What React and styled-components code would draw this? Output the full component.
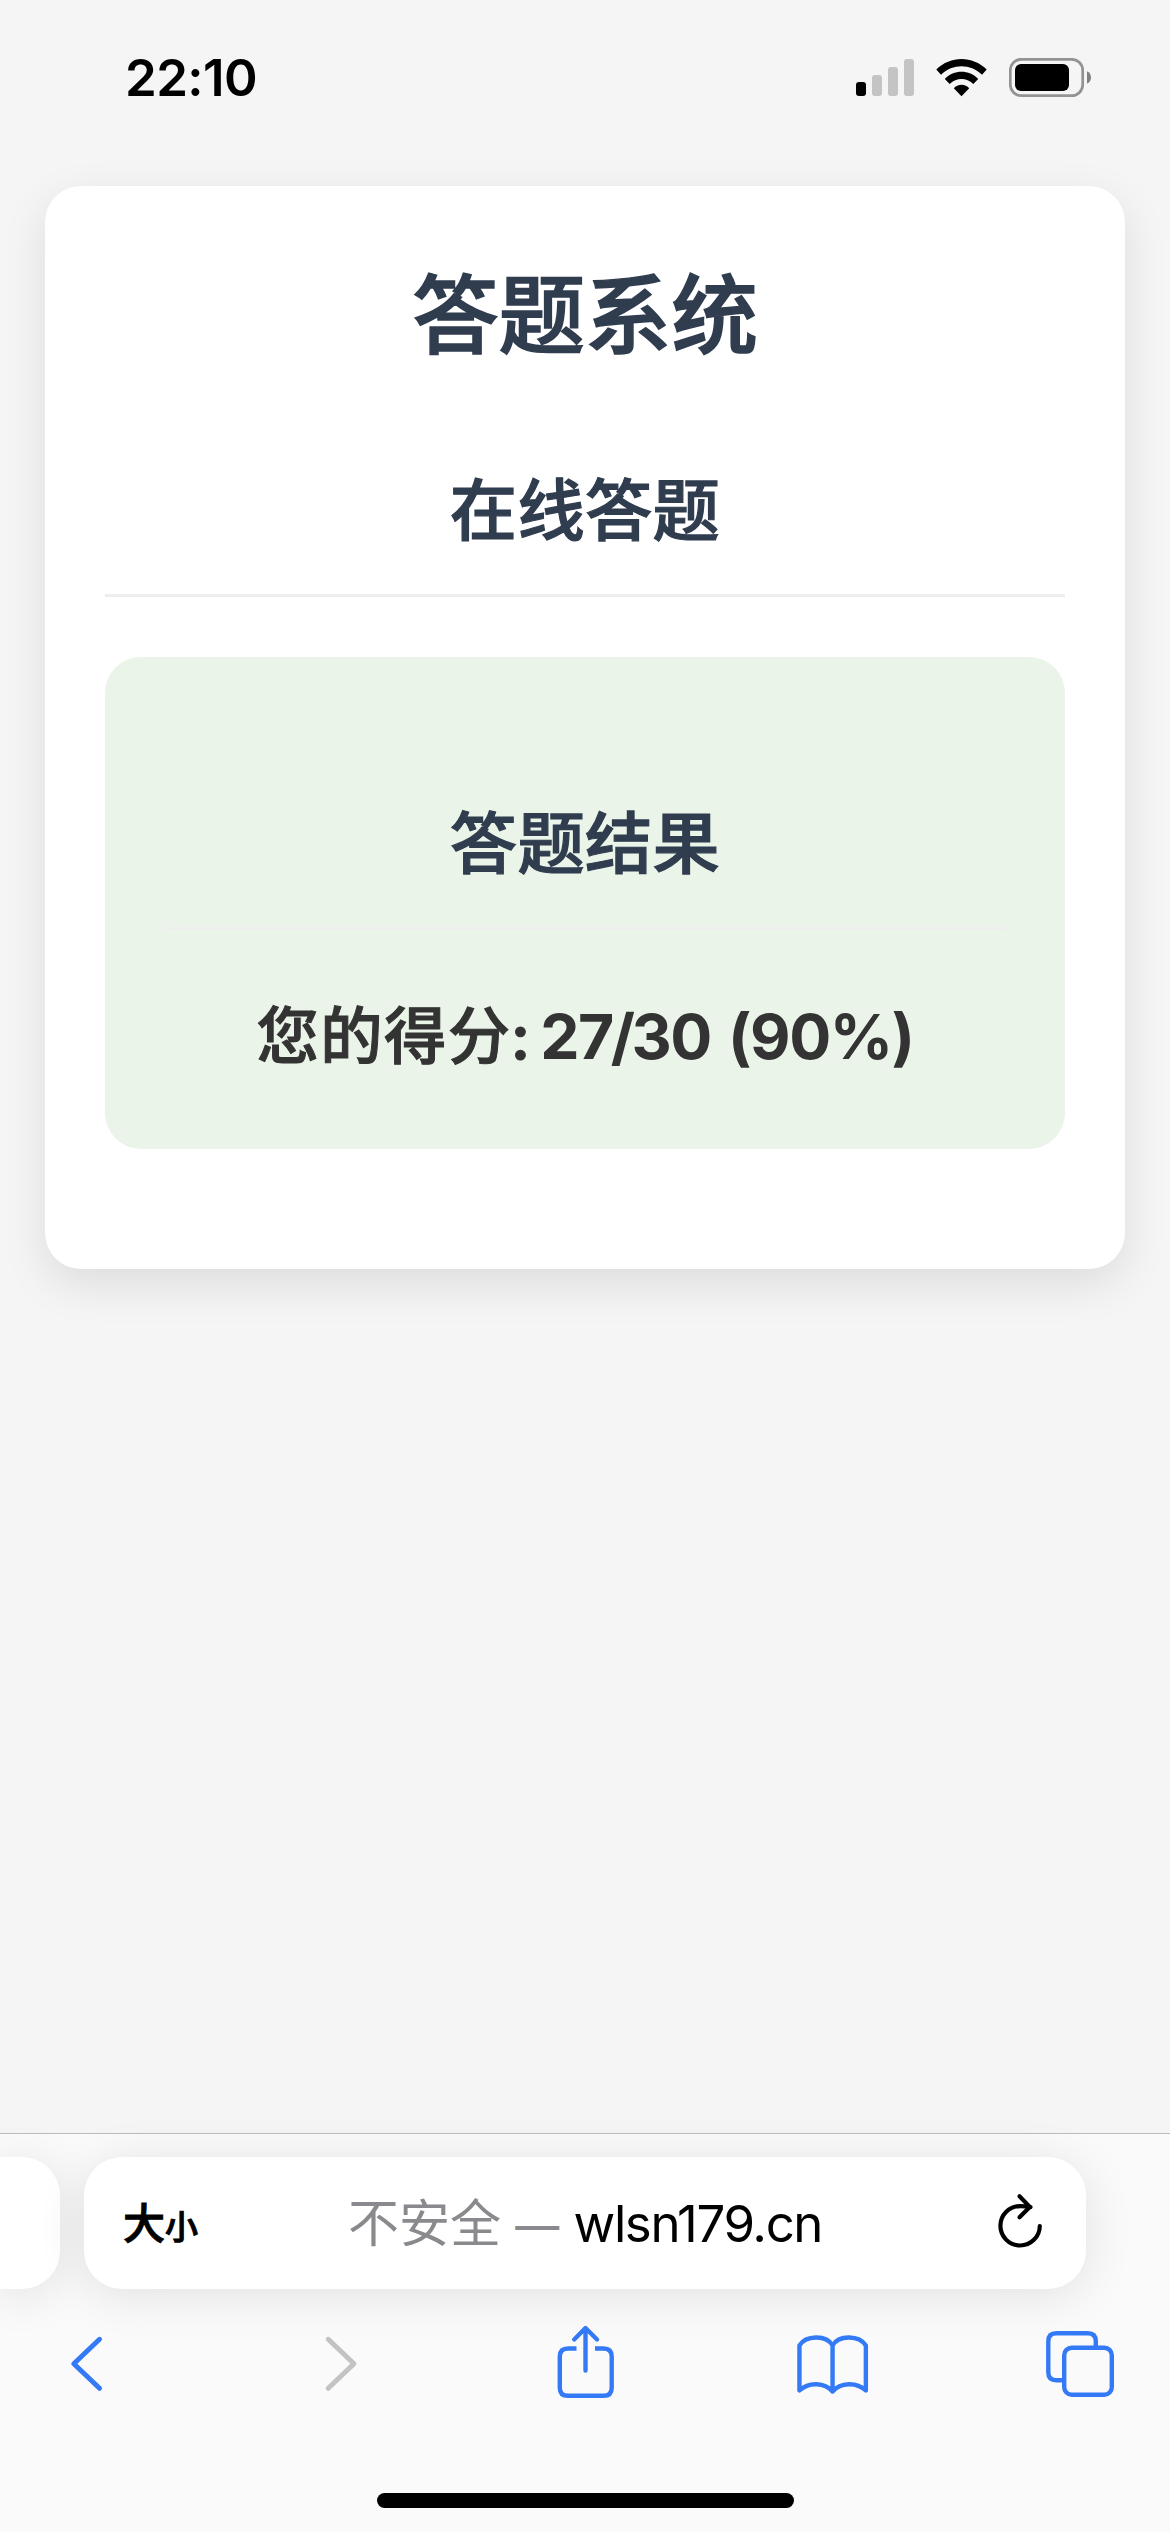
import React from "react";
import styled, { createGlobalStyle } from "styled-components";

const GlobalStyle = createGlobalStyle`
  *, *::before, *::after { box-sizing: border-box; }
  body {
    margin: 0;
    background: #f5f5f5;
    font-family: Inter, "Noto Sans CJK SC", sans-serif;
    color: #333;
  }
  h1, h2, p { margin: 0; }
  svg { display: block; }
`;

const Screen = styled.div`
  display: flex;
  flex-direction: column;
  width: 1170px;
  height: 2532px;
  overflow: hidden;
  background: #f5f5f5;
`;

const StatusBar = styled.header`
  display: flex;
  justify-content: space-between;
  align-items: center;
  flex: none;
  height: 141px;
  padding: 14px 79px 0 125px;
`;

const Clock = styled.time`
  font-size: 51px;
  font-weight: 600;
  line-height: 60px;
  letter-spacing: -0.6px;
  color: #000;
`;

const StatusIcons = styled.div`
  display: flex;
  align-items: center;
  gap: 22px;
`;

const Page = styled.main`
  flex: 1;
  padding: 45px;
`;

const Card = styled.section`
  height: 1083px;
  padding: 60px;
  border-radius: 36px;
  background: #fff;
  box-shadow: 0 15px 45px rgba(0, 0, 0, 0.1);
  text-align: center;
`;

const Title = styled.h1`
  padding-top: 18px;
  font-size: 86.4px;
  font-weight: 500;
  line-height: 104px;
  color: #303d4f;
  -webkit-text-stroke: 1.5px #303d4f;
`;

const Heading = styled.h2`
  margin-top: ${(p) => p.$top}px;
  padding-bottom: 38px;
  border-bottom: 3px solid #eee;
  font-size: 67.2px;
  font-weight: 500;
  line-height: 90px;
  letter-spacing: 0.4px;
  color: #303d4f;
  -webkit-text-stroke: 1.2px #303d4f;
`;

const ResultBox = styled.div`
  height: 492px;
  margin-top: 60px;
  padding: 60px;
  border-radius: 36px;
  background: #eaf4e8;
`;

const Score = styled.p`
  margin-top: 57px;
  font-size: 62.4px;
  font-weight: 700;
  line-height: 100px;
  letter-spacing: -1.5px;
  white-space: nowrap;
  color: #333;
`;

const ScoreLabel = styled.span`
  margin-right: -5px;
  font-weight: 500;
  letter-spacing: 1.4px;
  -webkit-text-stroke: 1px #333;
`;

const Colon = styled.span`
  margin-left: -1px;
  font-weight: 600;
`;

const Slash = styled.span`
  margin: 0 -2px;
`;

const Percent = styled.span`
  margin-left: 4px;
`;

const BrowserBar = styled.footer`
  flex: none;
  height: 399px;
  border-top: 1px solid #bdbdbd;
  background: #fafafa;
`;

const TabStrip = styled.div`
  display: flex;
  gap: 24px;
  padding-top: 23px;
`;

const AddressCard = styled.div`
  display: flex;
  align-items: center;
  flex: none;
  width: ${(p) => p.$width}px;
  height: 132px;
  padding: ${(p) => (p.$peek ? "0" : "0 42px 0 39px")};
  border-radius: ${(p) => (p.$peek ? "0 38px 38px 0" : "38px")};
  background: #fff;
  box-shadow: 0 6px 48px rgba(0, 0, 0, 0.1);
`;

const TextSize = styled.div`
  display: flex;
  align-items: baseline;
  width: 80px;
  padding-top: 4px;
  font-weight: 500;
  line-height: 60px;
  color: #000;
  -webkit-text-stroke: 1px #000;
`;

const Glyph = styled.span`
  font-size: ${(p) => p.$size}px;
`;

const Address = styled.div`
  flex: 1;
  padding: 4px 29px 0 0;
  text-align: center;
  font-size: 51px;
  line-height: 60px;
  letter-spacing: -1.4px;
  white-space: nowrap;
  color: #000;
`;

const Insecure = styled.span`
  letter-spacing: 0;
  color: #8a8a8e;
`;

const Dash = styled.span`
  font-size: 44px;
  font-weight: 500;
`;

const Toolbar = styled.nav`
  display: flex;
  justify-content: space-between;
  padding: 34px 51px 0 50px;
`;

const HomeIndicator = styled.div`
  width: 417px;
  height: 15px;
  margin: 90px auto 0;
  border-radius: 8px;
  background: #000;
`;

const Line = styled.svg`
  fill: none;
  stroke: ${(p) => p.$color || "#347af6"};
  stroke-width: ${(p) => p.$weight || 4.4};
  stroke-linecap: round;
  stroke-linejoin: round;
`;

const Signal = () => (
  <svg width="58" height="40" viewBox="856 58 58 40">
    <rect x="856" y="82" width="10" height="14" rx="3" fill="#000" />
    <rect x="872" y="75" width="10" height="21" rx="3" fill="#c4c4c4" />
    <rect x="888" y="67" width="10" height="29" rx="3" fill="#c4c4c4" />
    <rect x="904" y="59" width="10" height="37" rx="3" fill="#c4c4c4" />
  </svg>
);

const Wifi = () => (
  <svg width="51" height="40" viewBox="936 58 51 40">
    <path d="M936.3 69.5C950.5 55.5 972.5 55.5 986.7 69.5L982 74.7C970.2 63.4 952.8 63.4 941 74.7Z" />
    <path d="M944.8 79C953.8 69.4 969.2 69.4 978.2 79L973.3 83.9C966.5 77.5 956.5 77.5 949.7 83.9Z" />
    <path d="M953.8 88.3C957.5 83.6 965.5 83.6 969.2 88.3L961.5 96.2Z" />
  </svg>
);

const Battery = () => (
  <svg width="82" height="40" viewBox="1009 58 82 40">
    <rect x="1010.3" y="59.3" width="72.4" height="36.4" rx="11" fill="none" stroke="#939393" strokeWidth="2.7" />
    <rect x="1015" y="64" width="54" height="27" rx="6" fill="#000" />
    <path d="M1087 71.3C1092.3 73.5 1092.3 81.5 1087 83.7Z" fill="#808080" />
  </svg>
);

const Reload = () => (
  <Line width="48" height="60" viewBox="996 2193 48 60" $color="#000" $weight={4.2}>
    <path d="M1039.8 2226A19.7 19.7 0 1 1 1020.2 2206.1Q1026 2206.1 1030.5 2207" />
    <path d="M1019.5 2196.3L1029.8 2206.9L1019.5 2217.3" />
  </Line>
);

const Back = () => (
  <Line width="76" height="80" viewBox="50 2323 76 80" $weight={5}>
    <path d="M99.5 2339.3L73.8 2363.7L99.5 2388.3" />
  </Line>
);

const Forward = () => (
  <Line width="76" height="80" viewBox="298.25 2323 76 80" $weight={5} $color="#c3c3c3">
    <path d="M328.5 2339.3L354.2 2363.7L328.5 2388.3" />
  </Line>
);

const Share = () => (
  <Line width="76" height="80" viewBox="546.5 2323 76 80">
    <path d="M585 2370.5V2328.5M573.7 2339.5L585 2328L596.5 2339.5" />
    <path strokeLinecap="butt" d="M576 2348.5H567.5Q559.3 2348.5 559.3 2356.5V2388Q559.3 2395.8 567.5 2395.8H603Q611.2 2395.8 611.2 2388V2356.5Q611.2 2348.5 603 2348.5H594.5" />
  </Line>
);

const Book = () => (
  <Line width="76" height="80" viewBox="794.75 2323 76 80">
    <path d="M832.3 2391.5C824.5 2382.3 808.5 2381.6 799.2 2390.5V2345.5C805.5 2335.3 826 2334.5 832.3 2345.5V2391.5C840.1 2382.3 856.1 2381.6 865.6 2390.5V2345.5C859 2335.3 838.6 2334.5 832.3 2345.5" />
  </Line>
);

const Tabs = () => (
  <Line width="76" height="80" viewBox="1043 2323 76 80">
    <path strokeLinecap="butt" d="M1063 2380.3H1056.3Q1048.3 2380.3 1048.3 2372.3V2341.2Q1048.3 2333.2 1056.3 2333.2H1087.8Q1095.8 2333.2 1095.8 2341.2V2346.5" />
    <rect x="1064.2" y="2347.7" width="47.6" height="47" rx="7.5" />
  </Line>
);

export default function App() {
  return (
    <>
      <GlobalStyle />
      <Screen>
        <StatusBar>
          <Clock>22:10</Clock>
          <StatusIcons>
            <Signal />
            <Wifi />
            <Battery />
          </StatusIcons>
        </StatusBar>
        <Page>
          <Card>
            <Title>答题系统</Title>
            <Heading $top={98}>在线答题</Heading>
            <ResultBox>
              <Heading $top={82}>答题结果</Heading>
              <Score>
                <ScoreLabel>
                  您的得分<Colon>:</Colon>
                </ScoreLabel>{" "}
                27<Slash>/</Slash>30 <Percent>(90%)</Percent>
              </Score>
            </ResultBox>
          </Card>
        </Page>
        <BrowserBar>
          <TabStrip>
            <AddressCard $width={60} $peek />
            <AddressCard $width={1002}>
              <TextSize>
                <Glyph $size={42}>大</Glyph>
                <Glyph $size={33}>小</Glyph>
              </TextSize>
              <Address>
                <Insecure>
                  不安全 <Dash>—</Dash>{" "}
                </Insecure>
                wlsn179.cn
              </Address>
              <Reload />
            </AddressCard>
          </TabStrip>
          <Toolbar>
            <Back />
            <Forward />
            <Share />
            <Book />
            <Tabs />
          </Toolbar>
          <HomeIndicator />
        </BrowserBar>
      </Screen>
    </>
  );
}
